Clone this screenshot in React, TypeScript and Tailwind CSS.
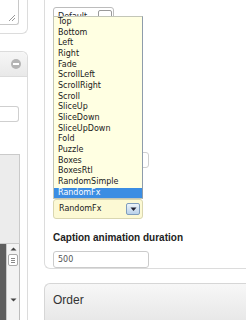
const items = [
  'Top',
  'Bottom',
  'Left',
  'Right',
  'Fade',
  'ScrollLeft',
  'ScrollRight',
  'Scroll',
  'SliceUp',
  'SliceDown',
  'SliceUpDown',
  'Fold',
  'Puzzle',
  'Boxes',
  'BoxesRtl',
  'RandomSimple',
  'RandomFx',
]

const ArrowDown = () => (
  <svg width="7" height="5" viewBox="0 0 7 5">
    <path d="M0.5 0.5h6L3.5 4z" fill="#223" />
  </svg>
)

const LeftColumn = () => (
  <div className="flex w-[28px] shrink-0 flex-col">
    {/* collapsed panel, only its right edge is on screen */}
    <div className="h-[35px] rounded-br-[6px] border-r border-b border-[#dcdcdc]">
      <div className="relative h-[25px] w-[19px] rounded-br-[3px] border-r border-b border-[#c8c8c8]">
        <svg className="absolute right-[3px] bottom-[3px]" width="6" height="6" viewBox="0 0 6 6">
          <path d="M0 6L6 0M3 6L6 3" stroke="#999" strokeWidth="1" />
        </svg>
      </div>
    </div>

    <div className="mt-[17px] flex flex-1 flex-col rounded-tr-[6px] border-t border-r border-[#dcdcdc]">
      <div className="flex h-[25px] items-center justify-end rounded-tr-[6px] border-b border-[#dcdcdc] bg-gradient-to-b from-[#f6f6f6] to-[#e9e9e9] pr-[6px]">
        <div className="flex h-[10px] w-[10px] items-center justify-center rounded-full bg-[#b4b4b4]">
          <div className="h-[2px] w-[6px] bg-white" />
        </div>
      </div>

      <div className="mt-[29px] h-[16px] w-[19px] rounded-r-[3px] border-y border-r border-[#cfcfcf]" />

      <div className="mt-[32px] h-[90px] w-[20px] border-y border-r border-[#cacaca] bg-[#ececec]" />

      <div className="flex h-[76px] w-[20px] border-r border-[#bdbdbd]">
        <div className="w-[6px] bg-[#5e5e5e]" />
        <div className="flex w-[13px] flex-col items-center border-l border-[#c8c8c8] bg-[#f3f3f3] pt-[3px]">
          <svg width="7" height="4" viewBox="0 0 7 4">
            <path d="M0.5 3.5L3.5 0.5l3 3z" fill="#444" />
          </svg>
          <div className="mt-[3px] flex h-[12px] w-[10px] flex-col justify-center gap-[1px] rounded-[2px] border border-[#a9a9a9] bg-white px-[2px]">
            <div className="h-px bg-[#888]" />
            <div className="h-px bg-[#888]" />
            <div className="h-px bg-[#888]" />
          </div>
          <svg className="mt-[32px]" width="7" height="4" viewBox="0 0 7 4">
            <path d="M0.5 0.5h6L3.5 3.5z" fill="#444" />
          </svg>
        </div>
      </div>
    </div>
  </div>
)

const EffectList = () => (
  <div className="absolute top-[16px] left-[8px] w-[90px] border border-[#c3c6b8] border-r-[#8e9cab] bg-[#ffffe2]">
    {items.map((item) => (
      <div
        key={item}
        className={
          item === 'RandomFx'
            ? 'h-[10.67px] bg-[#3b8de3] pl-[4px] leading-[10.67px] text-white'
            : 'h-[10.67px] pl-[4px] leading-[10.67px] text-[#1a1a1a]'
        }
      >
        {item}
      </div>
    ))}
  </div>
)

const SettingsPanel = () => (
  <div className="relative h-[274px] w-[220px] rounded-bl-[6px] border-l border-b border-[#dcdcdc] pl-[8px] font-['DejaVu_Sans',sans-serif] text-[8px]">
    <div className="mt-[7px] flex h-[20px] w-[61px] items-center justify-between rounded-[3px] border border-[#bcbcbc] pr-[1px] pl-[4px]">
      <span className="text-[#222]">Default</span>
      <div className="h-[14px] w-[14px] rounded-[2px] border border-[#9a9a9a] bg-white" />
    </div>

    <div className="mt-[125px] h-[16px] w-[96px] rounded-[3px] border border-[#cfcfcf]" />

    <div className="mt-[31px] flex h-[20px] w-[90px] items-center justify-between rounded-[3px] border border-[#d9d6b0] bg-[#fcf9d4] pr-[2px] pl-[5px]">
      <span className="text-[#222]">RandomFx</span>
      <div className="flex h-[12px] w-[14px] items-center justify-center rounded-[2px] border border-[#7f9dbd] bg-gradient-to-b from-[#eef4fa] to-[#b9d1ea]">
        <ArrowDown />
      </div>
    </div>

    <p className="mt-[13px] font-['Liberation_Sans',Arial,sans-serif] text-[10px] leading-[12px] font-bold text-[#222]">
      Caption animation duration
    </p>

    <div className="mt-[7px] flex h-[17px] w-[96px] items-center rounded-[3px] border border-[#cbcbcb] pl-[4px] text-[#555]">
      500
    </div>

    <EffectList />
  </div>
)

const OrderPanel = () => (
  <div className="mt-[14px] h-[40px] w-[220px] rounded-tl-[6px] border-t border-l border-[#d6d6d6] bg-gradient-to-b from-[#f7f7f7] to-[#e8e8e8] pt-[9px] pl-[8px] font-['Liberation_Sans',Arial,sans-serif] text-[12px] leading-[14px] text-[#333]">
    Order
  </div>
)

export default function App() {
  return (
    <div className="flex h-[320px] w-[246px] overflow-hidden bg-white">
      <LeftColumn />
      <div className="ml-[16px] flex flex-col">
        <SettingsPanel />
        <OrderPanel />
      </div>
    </div>
  )
}
